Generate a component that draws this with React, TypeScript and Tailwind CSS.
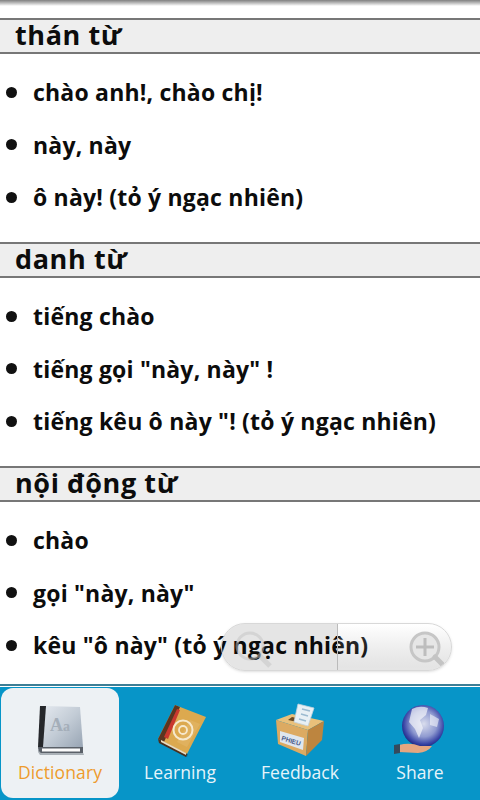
import { ReactNode } from 'react';

const sections = [
  { title: 'thán từ', items: ['chào anh!, chào chị!', 'này, này', 'ô này! (tỏ ý ngạc nhiên)'] },
  { title: 'danh từ', items: ['tiếng chào', 'tiếng gọi "này, này" !', 'tiếng kêu ô này "! (tỏ ý ngạc nhiên)'] },
  { title: 'nội động từ', items: ['chào', 'gọi "này, này"', 'kêu "ô này" (tỏ ý ngạc nhiên)'] },
];

function BookIcon() {
  return (
    <svg width="60" height="60" viewBox="0 0 60 60">
      <defs>
        <linearGradient id="bk" x1="0" y1="0" x2="1" y2="1">
          <stop offset="0" stopColor="#e4e9ef" />
          <stop offset="0.5" stopColor="#c3ccd6" />
          <stop offset="1" stopColor="#98a5b4" />
        </linearGradient>
      </defs>
      <path d="M8 52 L8 50 L52 50 L54 55 L10 55 Z" fill="#8d959d" opacity="0.7" />
      <path d="M15 6 L50 7 L53 47 L12 47 Z" fill="url(#bk)" />
      <path d="M10 6 L16 6 L13 47 L8 47 Z" fill="#25272b" />
      <path d="M8 47 L53 47 L53 53 L11 53 Q8 51 8 47 Z" fill="#5a6068" />
      <path d="M12 48.5 L50 48.5 L50 51.5 L12 51.5 Z" fill="#fbfbfb" />
      <text x="20" y="31" fontFamily="Liberation Serif, serif" fontSize="18" fontWeight="700" fill="#a4aeb9">A</text>
      <text x="33" y="31" fontFamily="Liberation Serif, serif" fontSize="14" fontWeight="700" fill="#a4aeb9">a</text>
    </svg>
  );
}

function AddressBookIcon() {
  return (
    <svg width="60" height="60" viewBox="0 0 60 60">
      <path d="M9 42 L37 57 L38 54 L10 39 Z" fill="#14506a" opacity="0.6" />
      <path d="M25 5 L56 17 L37 54 L8 39 Z" fill="#dca94f" />
      <path d="M40 20 L50 24 L37 47 L27 42 Z" fill="#e2b869" opacity="0.6" />
      <path d="M25 5 L30 7 L14 42 L8 39 Z" fill="#5b3520" />
      <path d="M27 9 L30 10 L18 39 L14 37 Z" fill="#c9382e" />
      <path d="M8 39 L37 54 L36 57 L9 43 Z" fill="#4a2f1c" />
      <path d="M11 40 L36 53 L36 55 L11 42 Z" fill="#e9dcc0" />
      <circle cx="33" cy="30" r="9.5" fill="none" stroke="#f6e9cd" strokeWidth="2" />
      <circle cx="33" cy="30" r="4" fill="none" stroke="#f6e9cd" strokeWidth="1.8" />
    </svg>
  );
}

function BallotIcon() {
  return (
    <svg width="60" height="60" viewBox="0 0 60 60">
      <path d="M6 20 L22 14 L54 21 L38 30 Z" fill="#e9c07a" />
      <path d="M22 17 L40 21 L36 24 L18 20 Z" fill="#6b4a22" />
      <path d="M28 4 L44 8 L38 26 L24 22 Z" fill="#e8f0f5" stroke="#c3d2dd" strokeWidth="0.8" />
      <path d="M32 9 L40 11 M31 14 L38 16 M29 19 L36 21" stroke="#9bbad0" strokeWidth="1.6" />
      <path d="M6 20 L38 30 L36 56 L8 44 Z" fill="#dcaa62" />
      <path d="M38 30 L54 21 L52 40 L36 56 Z" fill="#bd853f" />
      <path d="M10 31 L34 38 L33 50 L10 42 Z" fill="#dfe6ee" />
      <text x="11" y="40" fontFamily="Liberation Sans, sans-serif" fontSize="6.5" fontWeight="700" fill="#46598a" transform="rotate(17 11 40)">PHIEU</text>
    </svg>
  );
}

function GlobeIcon() {
  return (
    <svg width="60" height="60" viewBox="0 0 60 60">
      <defs>
        <radialGradient id="gl" cx="0.52" cy="0.45" r="0.56">
          <stop offset="0" stopColor="#d9dded" />
          <stop offset="0.55" stopColor="#8f9ad0" />
          <stop offset="0.85" stopColor="#3a46a6" />
          <stop offset="1" stopColor="#1c2680" />
        </radialGradient>
      </defs>
      <circle cx="33" cy="26" r="21" fill="url(#gl)" />
      <path d="M22 9 Q30 5 38 8 L36 15 L30 20 L33 28 L29 38 L25 29 L19 22 Z" fill="#f4f5fa" opacity="0.7" />
      <path d="M40 14 L49 19 L47 27 L40 25 Z" fill="#f4f5fa" opacity="0.6" />
      <path d="M9 45 Q20 42 30 46 L42 46 Q38 52 28 53 L9 52 Z" fill="#e5a680" />
      <path d="M4 45 L10 44 L10 53 L4 54 Z" fill="#35495c" />
    </svg>
  );
}

function Tab({ icon, label, active }: { icon: ReactNode; label: string; active?: boolean }) {
  return (
    <div
      className={`flex h-[110px] flex-col items-center rounded-xl pt-[12px] ${
        active ? 'w-[118px] bg-[#edf1f4] text-[#ee9b2c]' : 'w-[120px] text-[#e6f4fa]'
      }`}
    >
      {icon}
      <span className="text-[17.5px] leading-[24px] tracking-[0.1px]">{label}</span>
    </div>
  );
}

export default function App() {
  return (
    <div className="relative flex h-[800px] w-[480px] flex-col overflow-hidden bg-white font-['Open_Sans','Noto_Sans',sans-serif] text-[#0c0c0c]">
      <div className="h-[6px] shrink-0 bg-gradient-to-b from-[#808080] to-white" />
      <div className="min-h-0 flex-1 pt-[12px]">
        {sections.map((s) => (
          <section key={s.title} className="mb-[18px]">
            <h2 className="h-[36px] border-y-2 border-[#777] bg-[#eeeeee] pl-[15px] text-[27px] leading-[30px] font-bold tracking-[0.6px]">
              {s.title}
            </h2>
            <ul className="pt-[12px]">
              {s.items.map((t) => (
                <li key={t} className="flex h-[52.67px] items-center">
                  <span className="ml-[6px] h-[11px] w-[11px] rounded-full bg-[#111]" />
                  <span className="ml-[16px] text-[23px] font-bold tracking-[0.2px] whitespace-nowrap">{t}</span>
                </li>
              ))}
            </ul>
          </section>
        ))}
      </div>

      {/* zoom control lies over the list */}
      <div className="absolute top-[623px] left-[221px] flex h-[48px] w-[231px] overflow-hidden rounded-full border border-[#d8d8d8] shadow-sm">
        <div className="relative w-[116px] border-r border-[#bbb] bg-black/10">
          <svg className="absolute top-[6px] left-[10px]" width="40" height="40" viewBox="0 0 40 40" fill="none">
            <circle cx="18" cy="16" r="13" stroke="#c4c4c4" strokeWidth="3" opacity="0.5" />
            <path d="M28 26 L38 36" stroke="#c4c4c4" strokeWidth="5" opacity="0.5" />
          </svg>
        </div>
        <div className="relative flex-1 bg-gradient-to-b from-white/20 to-black/10">
          <svg className="absolute top-[6px] left-[70px]" width="40" height="40" viewBox="0 0 40 40" fill="none">
            <circle cx="17" cy="17" r="14" fill="#e6e6e6" stroke="#c6c6c6" strokeWidth="3" />
            <path d="M17 8 V26 M8 17 H26" stroke="#bdbdbd" strokeWidth="3" />
            <path d="M27 27 L37 37" stroke="#c4c4c4" strokeWidth="5" strokeLinecap="round" />
          </svg>
        </div>
      </div>

      <div className="absolute inset-x-0 top-[684px] h-[3px] border-t-2 border-[#3d7f96] bg-white" />
      <nav className="flex h-[113px] shrink-0 items-start bg-[#0795c8] pt-px pl-px">
        <Tab icon={<BookIcon />} label="Dictionary" active />
        <div className="w-px" />
        <Tab icon={<AddressBookIcon />} label="Learning" />
        <Tab icon={<BallotIcon />} label="Feedback" />
        <Tab icon={<GlobeIcon />} label="Share" />
      </nav>
    </div>
  );
}
